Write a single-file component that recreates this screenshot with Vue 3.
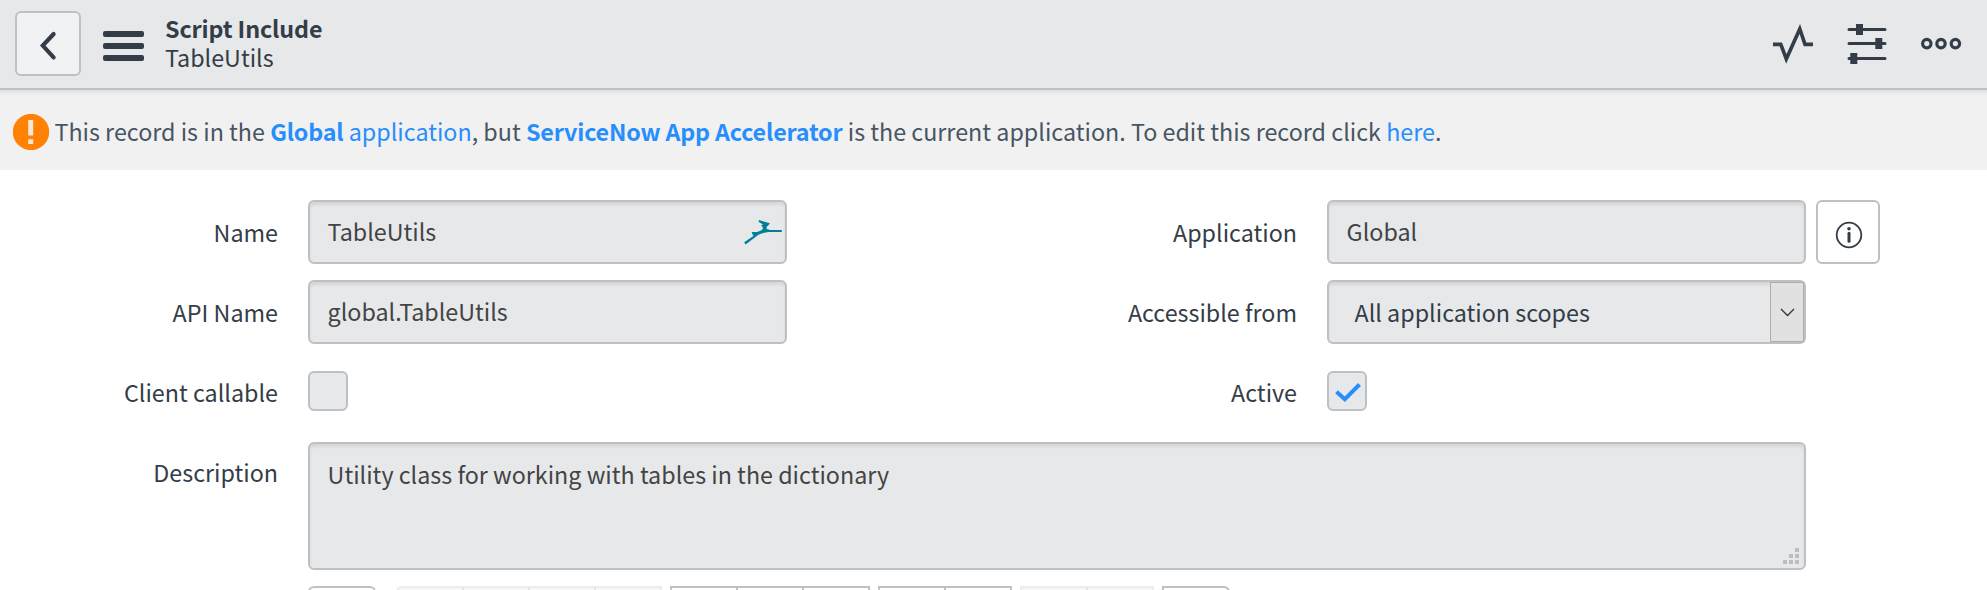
<script setup>
const groups = [
  { kind: 'solo', count: 1 },
  { kind: 'muted first', count: 4 },
  { kind: 'mid', count: 3 },
  { kind: 'mid', count: 2 },
  { kind: 'muted', count: 2 },
  { kind: 'last', count: 1 },
]
</script>

<template>
  <div class="page">
    <header class="header">
      <button class="back" aria-label="Back">
        <svg width="64" height="62" viewBox="0 0 64 62"><path d="M36.6 22 25.8 33.6 36.6 45.4" fill="none" stroke="#343d47" stroke-width="4.2" stroke-linecap="round" stroke-linejoin="miter" /></svg>
      </button>
      <div class="burger"><i></i><i></i><i></i></div>
      <div class="titles">
        <div class="title">Script Include</div>
        <div class="subtitle">TableUtils</div>
      </div>
      <svg class="tools" width="200" height="88" viewBox="1770 0 200 88" fill="none" stroke="#343d47">
        <path d="M1773 44.4H1780.8L1786.3 59L1799.8 29L1805 44.4H1813" stroke-width="3.6" />
        <g stroke-width="3" stroke-linecap="round">
          <path d="M1849 29.5H1885M1849 43.5H1885M1849 58.5H1885" />
        </g>
        <g fill="#343d47" stroke="none">
          <rect x="1856" y="24" width="7" height="11" />
          <rect x="1875.3" y="38" width="7" height="11" />
          <rect x="1850.3" y="53" width="7" height="11" />
        </g>
        <g stroke-width="3.2">
          <circle cx="1926.8" cy="43.6" r="4.2" />
          <circle cx="1941" cy="43.6" r="4.2" />
          <circle cx="1955.4" cy="43.6" r="4.2" />
        </g>
      </svg>
    </header>

    <div class="notice">
      <svg width="36" height="36" viewBox="0 0 36 36">
        <circle cx="18" cy="18" r="18.2" fill="#ff8205" />
        <path d="M15.2 6h5v15.5h-5zM15.2 25.3h5v4.7h-5z" fill="#f3e6da" />
      </svg>
      <p>This record is in the <a><b>Global</b> application</a>, but <a><b>ServiceNow App Accelerator</b></a> is the current application. To edit this record click <a>here</a>.</p>
    </div>

    <main class="form">
      <div class="row">
        <label>Name</label>
        <div class="field">
          <span>TableUtils</span>
          <svg class="leap" width="38" height="26" viewBox="0 0 38 26">
            <path d="M.2 22.3 9.7 15.8 8.7 15 7.7 12.1 13.1 12.1 17 10.4 19 8.7 18.5 6.8 17 5.4 19 4.6 14.8 1.9 14.8 0 25.9 3.2 23.8 6 22.7 6.6 22.7 9 26 10 37.8 10V12.1H25C19.5 12.4 15 14.4 12.2 16.4L1.5 24.5Z" fill="#007f9b" />
          </svg>
        </div>
        <label class="right">Application</label>
        <div class="field"><span>Global</span></div>
        <button class="info" aria-label="Info">
          <svg width="28" height="28" viewBox="0 0 28 28"><circle cx="14" cy="14" r="12.3" fill="none" stroke="#343d47" stroke-width="1.8" /><circle cx="14" cy="7.7" r="1.8" fill="#343d47" /><path d="M14 12.2V20.2" stroke="#343d47" stroke-width="3" stroke-linecap="round" /></svg>
        </button>
      </div>
      <div class="row">
        <label>API Name</label>
        <div class="field"><span>global.TableUtils</span></div>
        <label class="right">Accessible from</label>
        <div class="field select">
          <span>All application scopes</span>
          <div class="arrow"><svg width="15" height="9" viewBox="0 0 15 9"><path d="M1 1 7.5 7.5 14 1" fill="none" stroke="#333" stroke-width="1.3" /></svg></div>
        </div>
      </div>
      <div class="row">
        <label>Client callable</label>
        <div class="cell"><div class="check"></div></div>
        <label class="right">Active</label>
        <div class="check">
          <svg width="36" height="36" viewBox="0 0 36 36"><path d="M7.5 18.8 15.8 26.2 30.5 11.5" fill="none" stroke="#278efc" stroke-width="4" /></svg>
        </div>
      </div>
      <div class="row tall">
        <label>Description</label>
        <div class="area">
          <span>Utility class for working with tables in the dictionary</span>
          <svg class="grip" width="16" height="16" viewBox="0 0 16 16" fill="#bcbdbe"><path d="M12 0h4v4h-4zM6 6h4v4H6zM12 6h4v4h-4zM0 12h4v4H0zM6 12h4v4H6zM12 12h4v4h-4z" /></svg>
        </div>
      </div>
      <div class="toolbar">
        <div v-for="(g, i) in groups" :key="i" class="group" :class="g.kind">
          <i v-for="n in g.count" :key="n"></i>
        </div>
      </div>
    </main>
  </div>
</template>

<style>
body { margin: 0; background: #fff; overflow: hidden; }
</style>

<style scoped>
* { box-sizing: border-box; }
.page {
  width: 1987px; height: 590px; overflow: hidden;
  font-family: "Noto Sans CJK SC", "Noto Sans", sans-serif;
  font-size: 23.3px; line-height: 28px; color: #343d47; white-space: nowrap;
}
button { padding: 0; font: inherit; }
.header {
  height: 90px; display: flex; align-items: flex-start; background: #e6e8ea;
  border-bottom: 2px solid #bdc0c4; padding-left: 15px;
}
.back {
  width: 66px; height: 65px; margin-top: 11px; border: 2px solid #bdc0c8;
  border-radius: 6px; background: #f0f2f4; overflow: hidden;
}
.back svg { display: block; margin-top: -1px; }
.burger { width: 41px; margin: 31px 0 0 22px; display: flex; flex-direction: column; gap: 6px; }
.burger i { height: 6px; border-radius: 2px; background: #343d47; }
.titles { margin: 14px 0 0 21px; }
.title { font-weight: 700; letter-spacing: -.13px; }
.subtitle { margin-top: 1px; }
.tools { margin: 0 17px 0 auto; display: block; }
.notice {
  height: 80px; display: flex; align-items: center; padding: 4px 0 0 13px;
  background: linear-gradient(#dfe0e1, #f1f1f1 6px); color: #485563;
}
.notice p { margin: -3px 0 0 5.5px; }
a { color: #278efc; }
b { font-weight: 700; letter-spacing: -.17px; }
.form { padding-top: 30px; display: flex; flex-direction: column; gap: 16px; }
.row { height: 64px; display: flex; align-items: center; }
label { width: 278px; margin-right: 30px; text-align: right; }
label.right { width: 510px; margin-right: 30px; }
.cell { width: 479px; }
.field {
  width: 479px; height: 64px; border: 2px solid #bdc0c4; border-radius: 6px;
  background: #e6e8ea; box-shadow: inset 0 3px 3px rgba(0, 0, 0, .08); color: #444;
  display: flex; align-items: center; padding-left: 17.6px;
}
.field span { margin-top: -2px; }
.leap { margin: 2px 3px 0 auto; }
.select { padding-left: 25.5px; color: #343d47; }
.select span { margin-top: 0; }
.arrow {
  width: 34px; height: 60px; margin-left: auto; background: #e1e1e1;
  border: 1px solid #adadad; display: flex; align-items: center; justify-content: center;
}
.info {
  width: 64px; height: 64px; margin-left: 10px; border: 2px solid #bdc0c4; border-radius: 6px;
  background: #fff; display: flex; align-items: center; justify-content: center;
}
.info svg { margin: 6px 0 0 2px; }
.check {
  width: 40px; height: 40px; margin-top: -2px; border: 2px solid #bdc0c4; border-radius: 6px; background: #e6e8ea;
}
.check svg { display: block; }
.tall { height: 130px; align-items: flex-start; }
.tall label { margin-top: 18px; }
.area {
  width: 1498px; height: 128px; margin-top: 2px; border: 2px solid #bdc0c4; border-radius: 6px;
  background: #e6e8ea; box-shadow: inset 0 3px 3px rgba(0, 0, 0, .08); color: #444;
  display: flex; justify-content: space-between; padding: 16px 5px 4px 17.6px;
}
.grip { align-self: flex-end; }
.toolbar { padding-left: 308px; display: flex; }
.group { display: flex; height: 36px; margin-right: 8px; border: 2px solid #bdc0c4; overflow: hidden; }
.group i { width: 66px; border-right: 2px solid #bdc0c4; }
.group i:last-child { width: 64px; border-right: 0; }
.solo { margin-right: 20px; border-radius: 6px; }
.muted { background: #f5f6f7; border-color: #ebecee; }
.muted i { border-color: #dfe1e4; }
.first { border-radius: 6px 0 0 6px; }
.last { border-radius: 0 6px 6px 0; }
</style>
